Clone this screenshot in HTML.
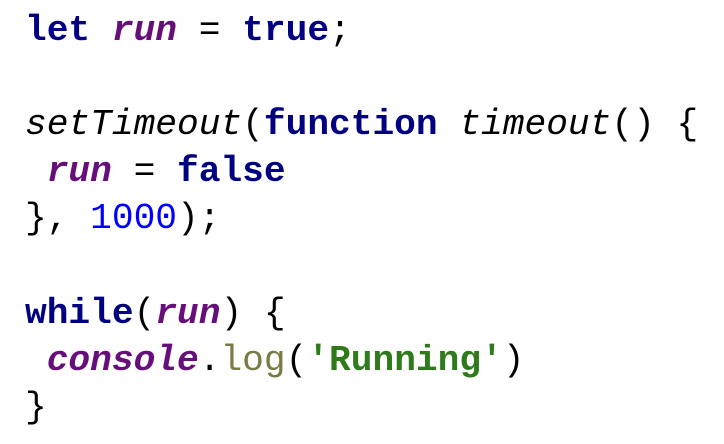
<!DOCTYPE html>
<html><head><style>
html,body{margin:0;padding:0;background:#fff;width:724px;height:444px;overflow:hidden}
pre{margin:0;position:absolute;left:25px;top:7px;font-family:"Liberation Mono",monospace;font-size:36.2px;line-height:47.1px;color:#000}
.k{color:#000080;font-weight:bold}
.v{color:#660e7a;font-weight:bold;font-style:italic}
.i{font-style:italic}
.n{color:#0000ff}
.s{color:#2f7a1a;font-weight:bold}
.m{color:#7a7a43}
</style></head><body>
<pre><span class="k">let</span> <span class="v">run</span> = <span class="k">true</span>;

<span class="i">setTimeout</span>(<span class="k">function</span> <span class="i">timeout</span>() {
 <span class="v">run</span> = <span class="k">false</span>
}, <span class="n">1000</span>);

<span class="k">while</span>(<span class="v">run</span>) {
 <span class="v">console</span>.<span class="m">log</span>(<span class="s">'Running'</span>)
}</pre>
</body></html>
